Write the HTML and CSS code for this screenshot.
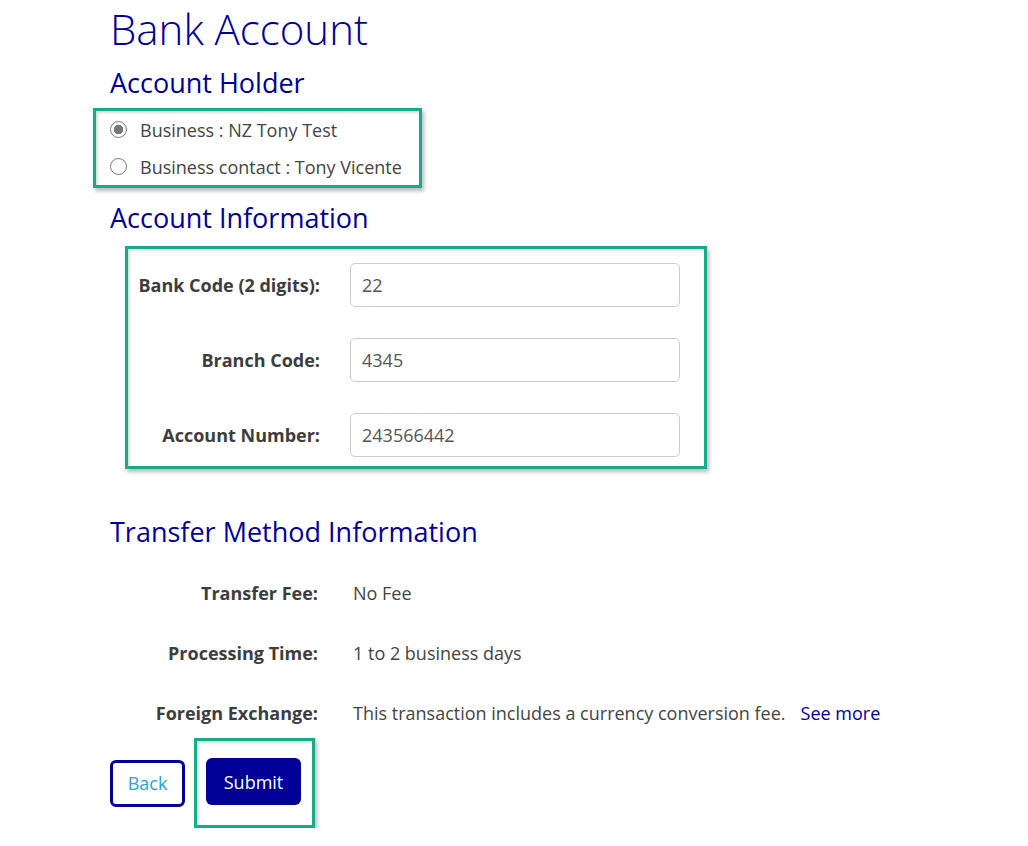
FILE: index.html
```html
<!DOCTYPE html>
<html lang="en">
<head>
<meta charset="utf-8">
<title>Bank Account</title>
<link rel="stylesheet" href="styles.css">
</head>
<body>
<main class="page">
  <h1 class="title">Bank Account</h1>

  <h2 class="section">Account Holder</h2>
  <div class="hl hl-radios">
    <label class="radio-row"><input type="radio" name="holder" class="radio" checked><span>Business : NZ Tony Test</span></label>
    <label class="radio-row"><input type="radio" name="holder" class="radio"><span>Business contact : Tony Vicente</span></label>
  </div>

  <h2 class="section section-info">Account Information</h2>
  <div class="hl hl-fields">
    <div class="field-grid">
      <label class="field-label" for="bank">Bank Code (2 digits):</label>
      <input class="field-input" id="bank" type="text" value="22">
      <label class="field-label" for="branch">Branch Code:</label>
      <input class="field-input" id="branch" type="text" value="4345">
      <label class="field-label" for="acct">Account Number:</label>
      <input class="field-input" id="acct" type="text" value="243566442">
    </div>
  </div>

  <h2 class="section section-transfer">Transfer Method Information</h2>
  <div class="info-grid">
    <div class="info-label">Transfer Fee:</div>
    <div class="info-value">No Fee</div>
    <div class="info-label">Processing Time:</div>
    <div class="info-value">1 to 2 business days</div>
    <div class="info-label">Foreign Exchange:</div>
    <div class="info-value">This transaction includes a currency conversion fee.<a class="see-more" href="#">See more</a></div>
  </div>

  <div class="actions">
    <button class="btn btn-back" type="button">Back</button>
    <div class="hl hl-submit">
      <button class="btn btn-submit" type="submit">Submit</button>
    </div>
  </div>
</main>
</body>
</html>
```

FILE: styles.css
```css
* { box-sizing: border-box; }

body {
  margin: 0;
  background: #ffffff;
  font-family: "Open Sans", "Liberation Sans", sans-serif;
  color: #444444;
}

.page {
  padding: 4px 0 0 110px;
}

.title {
  margin: 0;
  font-family: "Open Sans", sans-serif;
  font-weight: 300;
  font-size: 42px;
  line-height: 49px;
  color: #000096;
}

.section {
  margin: 12px 0 0 0;
  font-weight: 400;
  font-size: 27px;
  line-height: 36px;
  color: #000096;
}

.section-info { margin-top: 12px; }
.section-transfer { margin-top: 45px; }

.hl {
  border: 3px solid #12ad8c;
  box-shadow: inset 2px 2px 3px rgba(0, 0, 0, 0.14), 2px 3px 4px rgba(0, 0, 0, 0.28);
  background: #ffffff;
}

.hl-radios {
  width: fit-content;
  margin: 7px 0 0 -17px;
  padding: 0 17px 0 13px;
}

.radio-row {
  display: flex;
  align-items: center;
  height: 37px;
  font-size: 18px;
  color: #444444;
}

.radio {
  appearance: none;
  -webkit-appearance: none;
  margin: 0 13px 0 1px;
  width: 17px;
  height: 17px;
  border: 1.5px solid #777777;
  border-radius: 50%;
  background: #ffffff;
  flex: none;
}

.radio:checked {
  background: radial-gradient(circle, #767676 0 4.5px, #ffffff 5px);
}

.hl-fields {
  width: fit-content;
  margin: 10px 0 0 15px;
  padding: 14px 24px 9px 10px;
}

.field-grid {
  display: grid;
  grid-template-columns: 182px 330px;
  column-gap: 30px;
  row-gap: 31px;
  align-items: center;
}

.field-label {
  text-align: right;
  font-weight: 700;
  font-size: 18px;
  color: #3d3d3d;
  white-space: nowrap;
}

.field-input {
  height: 44px;
  width: 330px;
  border: 1px solid #cccccc;
  border-radius: 5px;
  padding: 0 11px;
  font-family: "Open Sans", sans-serif;
  font-size: 18px;
  color: #555555;
  background: #ffffff;
}

.info-grid {
  display: grid;
  grid-template-columns: 208px auto;
  column-gap: 35px;
  row-gap: 36px;
  margin-top: 31px;
  align-items: center;
}

.info-label {
  text-align: right;
  font-weight: 700;
  font-size: 18px;
  line-height: 24px;
  color: #3d3d3d;
  white-space: nowrap;
}

.info-value {
  font-size: 18px;
  line-height: 24px;
  color: #444444;
}

.see-more {
  margin-left: 15px;
  color: #000096;
  text-decoration: none;
}

.actions {
  display: flex;
  align-items: center;
  gap: 9px;
  margin-top: 13px;
}

.hl-submit {
  padding: 17px 11px 20px 9px;
}

.btn {
  font-family: "Open Sans", sans-serif;
  font-size: 18px;
  height: 47px;
  border-radius: 6px;
  cursor: pointer;
}

.btn-back {
  width: 75px;
  border: 3px solid #000096;
  background: #ffffff;
  color: #27a4d6;
}

.btn-submit {
  width: 95px;
  border: none;
  background: #000096;
  color: #ffffff;
}
```
